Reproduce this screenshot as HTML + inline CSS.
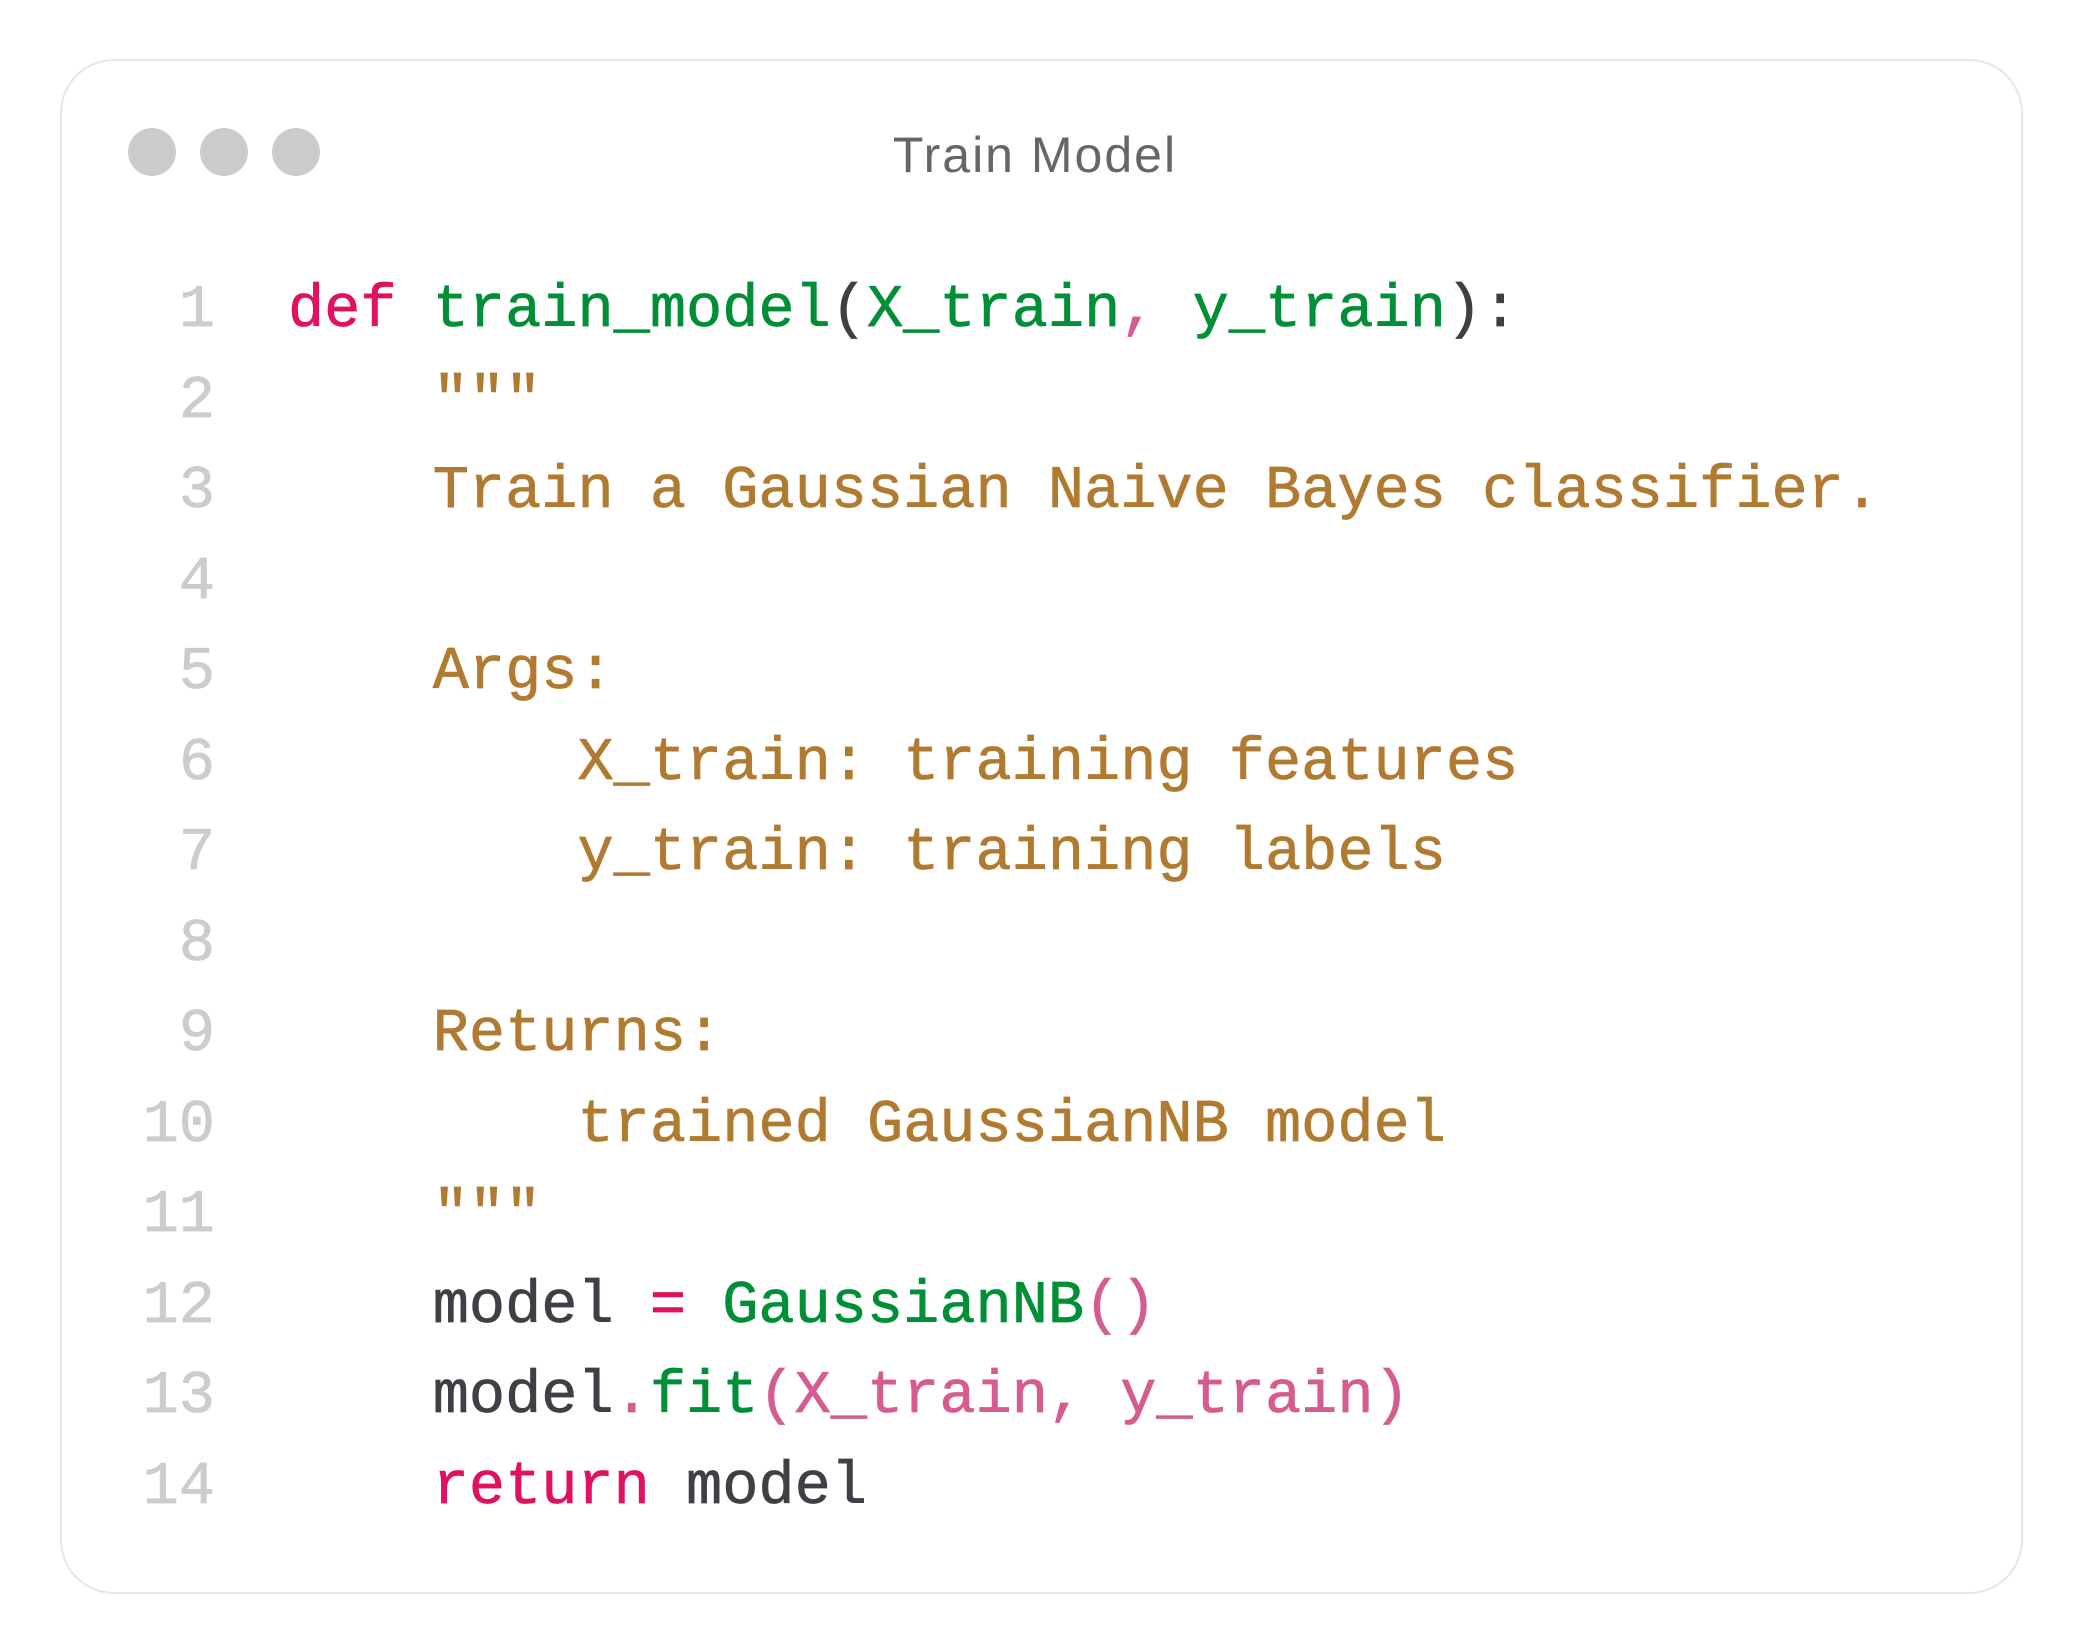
<!DOCTYPE html>
<html><head><meta charset="utf-8"><style>
html,body{margin:0;padding:0;background:#fff;width:2080px;height:1652px;overflow:hidden}
.card{position:absolute;left:60px;top:59px;width:1963px;height:1535px;border:2px solid #e6e6e6;border-radius:54px;background:#fff;box-sizing:border-box}
.dot{position:absolute;top:128px;width:48px;height:48px;border-radius:50%;background:#cccccc}
.title{position:absolute;left:0;width:2080px;top:125px;text-align:center;font:50px "Liberation Sans",sans-serif;color:#666;letter-spacing:2px;line-height:60px;padding-right:10px;box-sizing:border-box}
.code{position:absolute;top:266px;left:0;font-family:"Liberation Mono",monospace;font-size:60.3px;line-height:90.5px;white-space:pre;-webkit-text-stroke:0.7px currentColor}
.ln{position:absolute;left:100px;width:115px;text-align:right;color:#cccccc}
.src{position:absolute;left:288px;color:#3f3f46}
.k{color:#e0115f}.g{color:#008f36}.d{color:#b07a30}.p{color:#d55c8e}.t{color:#3f3f46}
</style></head><body>
<div class="card"></div>
<div class="dot" style="left:128px"></div>
<div class="dot" style="left:200px"></div>
<div class="dot" style="left:272px"></div>
<div class="title">Train Model</div>
<div class="code ln">1
2
3
4
5
6
7
8
9
10
11
12
13
14</div>
<div class="code src"><span class="k">def</span> <span class="g">train_model</span><span class="t">(</span><span class="g">X_train</span><span class="p">,</span> <span class="g">y_train</span><span class="t">):</span>
<span class="d">    """
    Train a Gaussian Naive Bayes classifier.

    Args:
        X_train: training features
        y_train: training labels

    Returns:
        trained GaussianNB model
    """</span>
    model <span class="k">=</span> <span class="g">GaussianNB</span><span class="p">()</span>
    model<span class="p">.</span><span class="g">fit</span><span class="p">(X_train, y_train)</span>
    <span class="k">return</span> model</div>
</body></html>
